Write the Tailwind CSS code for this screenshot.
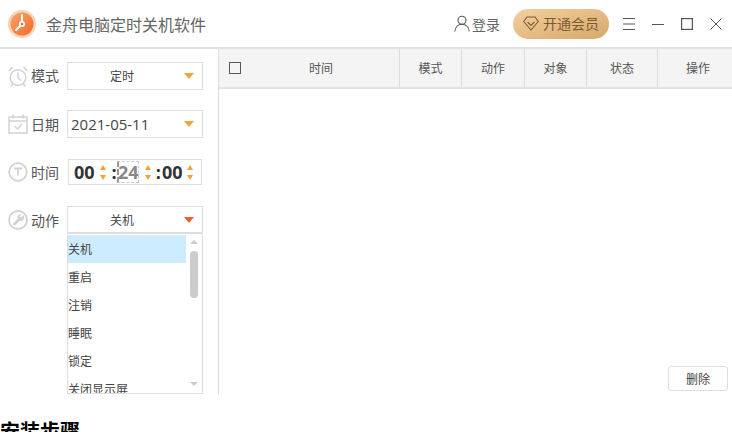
<!DOCTYPE html>
<html lang="zh">
<head>
    <meta charset="UTF-8">
    <title>金舟电脑定时关机软件</title>
    <script src="https://cdn.jsdelivr.net/npm/@tailwindcss/browser@4"></script>
</head>
<body class="bg-white h-[432px] w-[732px] overflow-hidden font-['Noto_Sans_CJK_SC',sans-serif] text-[#555]">
    <!-- title bar -->
    <header class="h-[49px] flex items-center border-b-2 border-[#e2e2e2] pl-2 pr-[10px]">
        <svg width="28" height="28" viewBox="0 0 28 28" class="shrink-0">
            <defs>
                <linearGradient id="logo" x1="0" y1="0" x2="1" y2="1">
                    <stop offset="0" stop-color="#f9a66c"/>
                    <stop offset="1" stop-color="#f0682c"/>
                </linearGradient>
            </defs>
            <circle cx="14" cy="14" r="14" fill="#fbd3b4"/>
            <circle cx="14" cy="14" r="11.5" fill="url(#logo)"/>
            <path d="M14 5v9M14 14l-6 6" stroke="#fff" stroke-width="2" stroke-linecap="round" fill="none"/>
            <circle cx="14" cy="14" r="3" fill="#fff"/>
            <circle cx="14" cy="14" r="1.3" fill="#f0682c"/>
        </svg>
        <h1 class="ml-[10px] text-[16px] leading-none text-[#666] font-normal">金舟电脑定时关机软件</h1>
        <div class="ml-auto flex items-center">
            <svg width="16" height="17" viewBox="0 0 16 17" fill="none" stroke="#555" stroke-width="1.1" class="-ml-[1px]">
                <circle cx="8" cy="5.2" r="4"/>
                <path d="M.8 16.5c.4-4 3-7.300 7.200-7.300s6.800 3.300 7.200 7.300"/>
            </svg>
            <span class="ml-[2px] text-[14px] leading-none text-[#666]">登录</span>
            <div class="ml-[13px] w-[96px] h-[30px] rounded-full bg-gradient-to-br from-[#f3d09e] to-[#d6a86a] flex items-center justify-center text-[14px] text-[#7b5a30]">
                <svg width="16" height="15" viewBox="0 0 16 15" fill="none" stroke="#7b5a30" stroke-width="1.1" class="mr-[4px]">
                    <path d="M4 1h8l3.300 4.500L8 14 .7 5.500z"/>
                    <path d="M4.500 6 8 9.500 11.500 6"/>
                </svg>
                开通会员
            </div>
            <svg width="12" height="12" viewBox="0 0 12 12" stroke="#555" stroke-width="1" class="ml-[14px]">
                <path d="M0 .5h12M0 6h12M0 11.500h12"/>
            </svg>
            <svg width="12" height="12" viewBox="0 0 12 12" stroke="#555" stroke-width="1" class="ml-[17px]">
                <path d="M0 6.500h12"/>
            </svg>
            <svg width="12" height="12" viewBox="0 0 12 12" fill="none" stroke="#555" stroke-width="1.2" class="ml-[17px]">
                <rect x=".6" y=".6" width="10.800" height="10.800"/>
            </svg>
            <svg width="12" height="12" viewBox="0 0 12 12" stroke="#555" stroke-width="1" class="ml-[17px]">
                <path d="M.5.500l11 11M11.500.500l-11 11"/>
            </svg>
        </div>
    </header>

    <div class="flex h-[345px]">
        <!-- left form -->
        <aside class="w-[219px] shrink-0 border-r border-[#ddd] pl-2 pt-[13px] text-[14px]">
            <div class="flex items-center h-[28px]">
                <svg width="20" height="21" viewBox="0 0 20 21" fill="none" stroke="#d2d2d2" stroke-width="1.500" class="shrink-0">
                    <circle cx="10" cy="11.500" r="7.800"/>
                    <path d="M10 6.500v5.500l3 2.500M.8 5 4.500 1M19.200 5 15.500 1M4.500 18 3 20.500M15.500 18 17 20.500"/>
                </svg>
                <span class="ml-[3px] w-[36px] leading-none pb-[2px]">模式</span>
                <div class="w-[136px] h-[28px] border border-[#ddd] flex items-center justify-center pr-[26px] relative text-[12px] text-[#444]">
                    定时
                    <i class="absolute right-[8px] top-[10px] w-0 h-0 border-x-[5px] border-x-transparent border-t-[6px] border-t-[#f7a03c]"></i>
                </div>
            </div>
            <div class="flex items-center h-[28px] mt-[20px]">
                <svg width="20" height="20" viewBox="0 0 20 20" fill="none" stroke="#d2d2d2" stroke-width="1.500" class="shrink-0">
                    <path d="M1 3h18v16H1zM1 7h18M5 .5v4M15 .5v4"/>
                    <path d="M6.500 12l3 3 4.500-5"/>
                </svg>
                <span class="ml-[3px] w-[36px] leading-none">日期</span>
                <div class="w-[136px] h-[28px] border border-[#ddd] flex items-center pl-[3px] relative text-[15px] text-[#444]">
                    <span class="font-['Open_Sans',sans-serif]">2021-05-11</span>
                    <i class="absolute right-[8px] top-[10px] w-0 h-0 border-x-[5px] border-x-transparent border-t-[6px] border-t-[#f7a03c]"></i>
                </div>
            </div>
            <div class="flex items-center h-[26px] mt-[21px]">
                <svg width="20" height="20" viewBox="0 0 20 20" fill="none" stroke="#d2d2d2" class="shrink-0">
                    <circle cx="10" cy="10" r="8.800" stroke-width="1.800"/>
                    <path d="M6 6.500h8M10 6.500v7" stroke-width="1.800"/>
                    <path d="M10 0v2M10 18v2M0 10h2M18 10h2" stroke-width="1.200"/>
                </svg>
                <span class="ml-[3px] w-[37px] leading-none">时间</span>
                <div class="w-[134px] h-[26px] border border-[#ddd] flex items-center pl-[5px] font-['Open_Sans',sans-serif] font-bold text-[18px] text-[#333] leading-none">
                    <span>00</span>
                    <span class="ml-[5px] flex flex-col gap-[5px]">
                        <i class="w-0 h-0 border-x-[3.500px] border-x-transparent border-b-[5px] border-b-[#f7a03c]"></i>
                        <i class="w-0 h-0 border-x-[3.500px] border-x-transparent border-t-[5px] border-t-[#f7a03c]"></i>
                    </span>
                    <span class="ml-[6px]">:</span>
                    <span class="h-[22px] w-[22px] border-l-2 border-l-[#999] border-y border-r border-dashed border-y-[#ccc] border-r-[#ccc] text-[#888] flex items-center justify-center">24</span>
                    <span class="ml-[6px] flex flex-col gap-[5px]">
                        <i class="w-0 h-0 border-x-[3.500px] border-x-transparent border-b-[5px] border-b-[#f7a03c]"></i>
                        <i class="w-0 h-0 border-x-[3.500px] border-x-transparent border-t-[5px] border-t-[#f7a03c]"></i>
                    </span>
                    <span class="ml-[5px]">:</span>
                    <span class="ml-[1px]">00</span>
                    <span class="ml-[5px] flex flex-col gap-[5px]">
                        <i class="w-0 h-0 border-x-[3.500px] border-x-transparent border-b-[5px] border-b-[#f7a03c]"></i>
                        <i class="w-0 h-0 border-x-[3.500px] border-x-transparent border-t-[5px] border-t-[#f7a03c]"></i>
                    </span>
                </div>
            </div>
            <div class="flex items-center h-[28px] mt-[21px]">
                <svg width="20" height="20" viewBox="0 0 20 20" fill="none" stroke="#d2d2d2" class="shrink-0">
                    <circle cx="10" cy="10" r="9" stroke-width="1.800"/>
                    <path d="M6.500 14 11.500 9" stroke-width="3" stroke-linecap="round"/>
                    <path d="M15 5.500l-2.500 2-1-1 1.500-2.500a3.500 3.500 0 0 0-3.500 4.500l2.500 2.500a3.500 3.500 0 0 0 3.500-5.500z" fill="#d2d2d2" stroke="none"/>
                </svg>
                <span class="ml-[3px] w-[36px] leading-none">动作</span>
                <div class="w-[136px] h-[28px] border border-[#ddd] border-b-2 flex items-center justify-center pr-[26px] relative text-[12px] text-[#444]">
                    关机
                    <i class="absolute right-[8px] top-[10px] w-0 h-0 border-x-[5px] border-x-transparent border-t-[6px] border-t-[#f0602c]"></i>
                </div>
            </div>
            <!-- dropdown list -->
            <div class="ml-[59px] mt-[1px] w-[136px] h-[159px] border border-t-0 border-[#ddd] flex overflow-hidden text-[12px] text-[#444] leading-[28px]">
                <ul class="w-[118px] shrink-0">
                    <li class="h-[28px] bg-[#cdecff]">关机</li>
                    <li class="h-[28px]">重启</li>
                    <li class="h-[28px]">注销</li>
                    <li class="h-[28px]">睡眠</li>
                    <li class="h-[28px]">锁定</li>
                    <li class="h-[28px]">关闭显示屏</li>
                </ul>
                <div class="flex-1 flex flex-col items-center pt-[5px] pr-[1px]">
                    <i class="w-0 h-0 border-x-[4px] border-x-transparent border-b-[4px] border-b-[#ccc]"></i>
                    <div class="w-[8px] h-[47px] mt-[7px] rounded-full bg-[#ccc]"></div>
                    <i class="w-0 h-0 mt-[84px] border-x-[4px] border-x-transparent border-t-[4px] border-t-[#ccc]"></i>
                </div>
            </div>
        </aside>

        <!-- task table -->
        <main class="flex-1 flex flex-col">
            <div class="h-[40px] flex items-center bg-[#f4f4f4] border-b-2 border-[#e2e2e2] text-[12px] text-[#555]">
                <div class="w-[181px] h-full border-r border-[#ddd] flex items-center pl-[10px]">
                    <i class="w-[12px] h-[12px] border border-[#555] shrink-0"></i>
                    <span class="ml-[68px]">时间</span>
                </div>
                <div class="w-[62px] h-full border-r border-[#ddd] flex items-center justify-center">模式</div>
                <div class="w-[63px] h-full border-r border-[#ddd] flex items-center justify-center">动作</div>
                <div class="w-[62px] h-full border-r border-[#ddd] flex items-center justify-center">对象</div>
                <div class="w-[71px] h-full border-r border-[#ddd] flex items-center justify-center">状态</div>
                <div class="flex-1 h-full flex items-center justify-center pl-[6px]">操作</div>
            </div>
            <div class="flex-1 flex flex-col justify-end items-end pr-[4px] pb-[3px]">
                <button class="w-[60px] h-[25px] border border-[#ddd] rounded-[3px] text-[12px] text-[#444] leading-none">删除</button>
            </div>
        </main>
    </div>

    <h2 class="mt-[23px] text-[20px] leading-[28px] font-bold text-black">安装步骤</h2>
</body>
</html>
